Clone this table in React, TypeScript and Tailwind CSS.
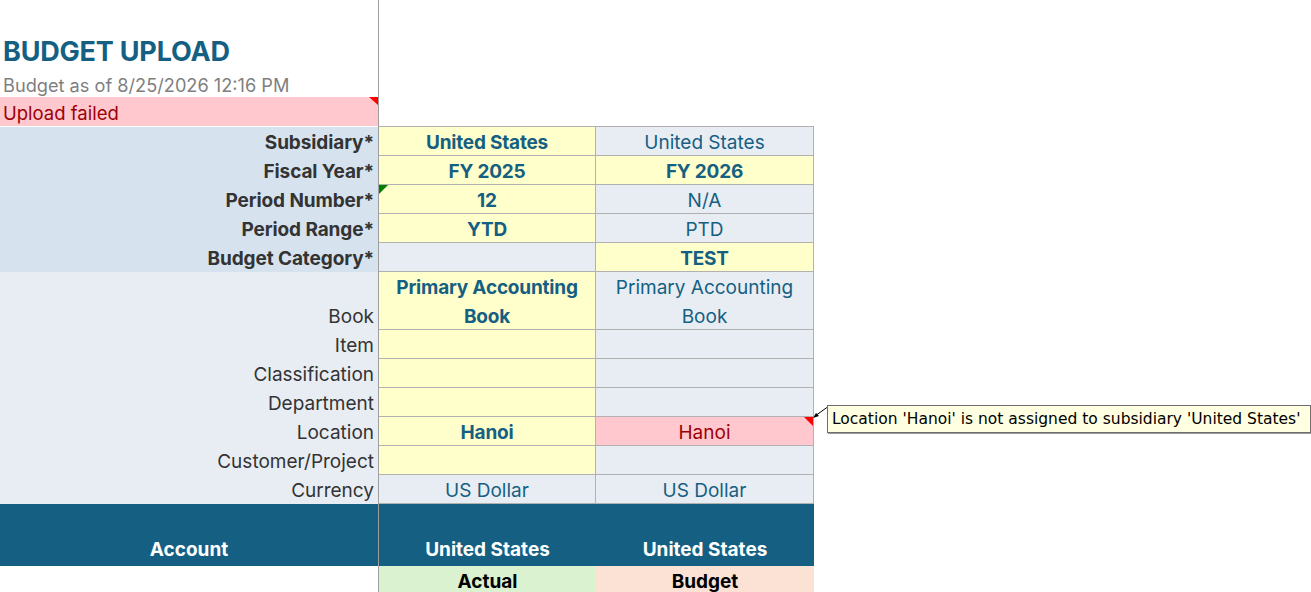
import React from 'react';

type Tone = 'yellow' | 'gray' | 'pink';

interface Cell {
  text?: string;
  bold?: boolean;
  tone: Tone;
  mark?: 'green' | 'red';
}

interface SheetRow {
  label: string;
  head?: boolean;
  tall?: boolean;
  b: Cell;
  c: Cell;
}

const toneClass: Record<Tone, string> = {
  yellow: 'bg-[#ffffcc] text-[#156082]',
  gray: 'bg-[#e8edf4] text-[#156082]',
  pink: 'bg-[#ffc7ce] text-[#9c0006]',
};

const rows: SheetRow[] = [
  { label: 'Subsidiary*', head: true, b: { text: 'United States', bold: true, tone: 'yellow' }, c: { text: 'United States', tone: 'gray' } },
  { label: 'Fiscal Year*', head: true, b: { text: 'FY 2025', bold: true, tone: 'yellow' }, c: { text: 'FY 2026', bold: true, tone: 'yellow' } },
  { label: 'Period Number*', head: true, b: { text: '12', bold: true, tone: 'yellow', mark: 'green' }, c: { text: 'N/A', tone: 'gray' } },
  { label: 'Period Range*', head: true, b: { text: 'YTD', bold: true, tone: 'yellow' }, c: { text: 'PTD', tone: 'gray' } },
  { label: 'Budget Category*', head: true, b: { tone: 'gray' }, c: { text: 'TEST', bold: true, tone: 'yellow' } },
  { label: 'Book', tall: true, b: { text: 'Primary Accounting Book', bold: true, tone: 'yellow' }, c: { text: 'Primary Accounting Book', tone: 'gray' } },
  { label: 'Item', b: { tone: 'yellow' }, c: { tone: 'gray' } },
  { label: 'Classification', b: { tone: 'yellow' }, c: { tone: 'gray' } },
  { label: 'Department', b: { tone: 'yellow' }, c: { tone: 'gray' } },
  { label: 'Location', b: { text: 'Hanoi', bold: true, tone: 'yellow' }, c: { text: 'Hanoi', tone: 'pink', mark: 'red' } },
  { label: 'Customer/Project', b: { tone: 'yellow' }, c: { tone: 'gray' } },
  { label: 'Currency', b: { text: 'US Dollar', tone: 'gray' }, c: { text: 'US Dollar', tone: 'gray' } },
];

const ValueCell: React.FC<{ cell: Cell; wide: string }> = ({ cell, wide }) => (
  <div
    className={`${wide} relative shrink-0 border-r border-b border-[#b1b1b1] flex items-end justify-center text-center leading-[29px] px-2 ${
      cell.bold ? 'font-bold tracking-[-0.2px]' : ''
    } ${toneClass[cell.tone]}`}
  >
    {cell.mark === 'green' && (
      <svg className="absolute left-0 top-0" width="9" height="9">
        <polygon points="0,0 9,0 0,9" fill="#008000" />
      </svg>
    )}
    {cell.mark === 'red' && (
      <svg className="absolute right-0 top-0" width="9" height="9">
        <polygon points="0,0 9,0 9,9" fill="#ff0000" />
      </svg>
    )}
    <span className="translate-y-[2px]">{cell.text}</span>
  </div>
);

export default function App() {
  return (
    <div
      className="w-[1311px] h-[592px] overflow-hidden bg-white relative text-[19px]"
      style={{ fontFamily: 'Inter, "Noto Sans", sans-serif' }}
    >
      {/* Title block */}
      <div className="flex">
        <div className="w-[379px] h-[97px] shrink-0 border-r border-[#9e9e9e] flex flex-col justify-end pl-[3px]">
          <div className="text-[27px] font-bold text-[#156082] leading-[32px] tracking-[-0.2px] mb-[2px]">BUDGET UPLOAD</div>
          <div className="text-[18.2px] text-[#7f7f7f] leading-[30px] mb-[-3px]">Budget as of 8/25/2026 12:16 PM</div>
        </div>
      </div>
      <div className="flex">
        <div className="w-[379px] h-[29px] shrink-0 border-r border-[#9e9e9e] bg-[#ffc7ce] text-[#9c0006] text-[18.5px] relative flex items-end pl-[3px] leading-[26px]">
          Upload failed
          <svg className="absolute right-0 top-0" width="9" height="8">
            <polygon points="0,0 9,0 9,8" fill="#ff0000" />
          </svg>
        </div>
      </div>

      {/* Parameter grid */}
      <div className="flex">
        <div className="w-[379px] shrink-0 border-r border-[#9e9e9e]" />
        <div className="w-[435px] border-t border-[#b1b1b1]" />
      </div>
      {rows.map((r) => (
        <div key={r.label} className={`flex ${r.tall ? 'h-[58px]' : 'h-[29px]'}`}>
          <div
            className={`w-[379px] shrink-0 border-r border-[#9e9e9e] flex items-end justify-end pr-[4px] leading-[26px] text-[#333333] ${
              r.head ? 'bg-[#d6e3ef] font-bold tracking-[-0.1px]' : 'bg-[#e8edf4]'
            }`}
          >
            {r.label}
          </div>
          <ValueCell cell={r.b} wide="w-[217px]" />
          <ValueCell cell={r.c} wide="w-[218px]" />
        </div>
      ))}

      {/* Column header */}
      <div className="flex h-[62px] font-bold text-white">
        <div className="w-[379px] shrink-0 border-r border-[#9e9e9e] bg-[#156082] flex items-end justify-center pb-[2px]">
          Account
        </div>
        <div className="w-[435px] bg-[#156082] flex items-end pb-[2px]">
          <div className="w-[217px] text-center">United States</div>
          <div className="w-[218px] text-center">United States</div>
        </div>
      </div>
      <div className="flex h-[29px] font-bold text-black">
        <div className="w-[379px] shrink-0 border-r border-[#9e9e9e]" />
        <div className="w-[217px] bg-[#daf2d0] flex items-end justify-center leading-[27px]">Actual</div>
        <div className="w-[218px] bg-[#fbe2d5] flex items-end justify-center leading-[27px]">Budget</div>
      </div>

      {/* Comment callout */}
      <svg className="absolute left-[808px] top-[400px]" width="24" height="24">
        <line x1="21" y1="6" x2="7" y2="16" stroke="#000" strokeWidth="1" />
        <polygon points="5,18 11,16 8,13" fill="#000" />
      </svg>
      <div
        className="absolute left-[827px] top-[405px] w-[484px] h-[28px] bg-[#ffffe1] border border-[#6e6e6e] shadow-[1px_1px_0_#9a9a9a] pl-[4px] text-[15.5px] leading-[26px] text-black whitespace-nowrap"
        style={{ fontFamily: '"DejaVu Sans", Verdana, sans-serif' }}
      >
        Location 'Hanoi' is not assigned to subsidiary 'United States'
      </div>
    </div>
  );
}
